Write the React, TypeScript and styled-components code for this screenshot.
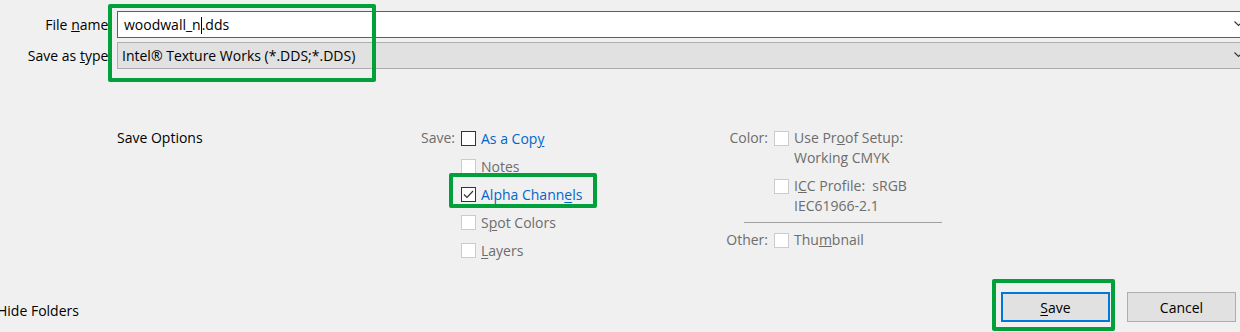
import React from "react";
import styled, { createGlobalStyle } from "styled-components";

const GlobalStyle = createGlobalStyle`
  html, body {
    margin: 0;
    padding: 0;
    background: #f0f0f0;
    overflow: hidden;
  }
  body {
    font-family: "Open Sans", "Noto Sans", sans-serif;
    font-size: 14px;
    color: #000;
  }
`;

const Dialog = styled.div`
  width: 1240px;
  height: 332px;
  display: flex;
  flex-direction: column;
  background: #f0f0f0;
  overflow: hidden;
`;

const Fields = styled.div`
  display: grid;
  grid-template-columns: 112px 1fr;
  column-gap: 5px;
  row-gap: 4px;
  padding-top: 11px;
  margin-right: -8px;
`;

const FieldLabel = styled.label`
  display: flex;
  align-items: center;
  justify-content: flex-end;
  height: 27px;
  white-space: nowrap;
`;

const FieldStack = styled.div`
  position: relative;
  grid-column: 2;
  grid-row: 1 / span 2;
  display: flex;
  flex-direction: column;
  gap: 4px;
`;

const Input = styled.div`
  position: relative;
  height: 27px;
  box-sizing: border-box;
  display: flex;
  align-items: center;
  padding-left: 6px;
  background: #fff;
  border: 1px solid #0078d7;
`;

const Caret = styled.span`
  display: inline-block;
  width: 1px;
  height: 17px;
  background: #000;
  vertical-align: middle;
`;

const Combo = styled(Input)`
  background: #e1e1e1;
  border-color: #adadad;
  padding-left: 4px;
`;

const Chevron = styled.svg`
  position: absolute;
  right: 4px;
  top: 9px;
`;

const Highlight = styled.div<{ $l: number; $t: number; $w: number; $h: number }>`
  position: absolute;
  left: ${(p) => p.$l}px;
  top: ${(p) => p.$t}px;
  width: ${(p) => p.$w}px;
  height: ${(p) => p.$h}px;
  box-sizing: border-box;
  border: 4px solid #00a13a;
  border-radius: 2px;
  pointer-events: none;
`;

const Options = styled.div`
  display: flex;
  margin-top: 59px;
`;

const SectionTitle = styled.div`
  width: 300px;
  padding-left: 117px;
  line-height: 20px;
`;

const SaveGroup = styled.div`
  position: relative;
  display: grid;
  grid-template-columns: 38px auto;
  column-gap: 6px;
  grid-auto-rows: 28px;
  margin-top: -4px;
  width: 307px;
`;

const GroupLabel = styled.div`
  color: #6d6d6d;
  text-align: right;
  line-height: 28px;
  white-space: nowrap;
`;

const CheckRow = styled.div`
  grid-column: 2;
  display: flex;
  align-items: center;
  gap: 5px;
  height: 28px;
`;

const Box = styled.span<{ $disabled?: boolean }>`
  width: 15px;
  height: 15px;
  box-sizing: border-box;
  flex: none;
  background: #fff;
  border: 1px solid ${(p) => (p.$disabled ? "#cccccc" : "#333333")};
  display: flex;
  align-items: center;
  justify-content: center;
`;

const OptText = styled.span<{ $tone: "link" | "muted" }>`
  color: ${(p) => (p.$tone === "link" ? "#0066cc" : "#6d6d6d")};
  white-space: nowrap;
  u {
    text-decoration-thickness: 1px;
    text-underline-offset: 2px;
  }
`;

const ColorGroup = styled.div`
  display: grid;
  grid-template-columns: 44px auto;
  column-gap: 6px;
  align-content: start;
  color: #6d6d6d;
  line-height: 20px;
`;

const ColorLabel = styled.div`
  grid-column: 1;
  text-align: right;
  white-space: nowrap;
`;

const ColorItem = styled.div<{ $gap?: number }>`
  grid-column: 2;
  display: flex;
  align-items: flex-start;
  gap: 5px;
  margin-top: ${(p) => p.$gap ?? 0}px;
  span:first-child {
    margin-top: 3px;
  }
`;

const Separator = styled.div`
  grid-column: 1 / span 2;
  margin: 6px 0 7px 20px;
  width: 198px;
  height: 1px;
  background: #a0a0a0;
`;

const Footer = styled.div`
  margin-top: auto;
  display: flex;
  align-items: center;
  justify-content: space-between;
  padding: 0 4px 10px 0;
`;

const HideFolders = styled.div`
  margin-left: -3px;
  margin-top: 8px;
  line-height: 20px;
`;

const Buttons = styled.div`
  position: relative;
  display: flex;
  gap: 17px;
`;

const Button = styled.button<{ $focused?: boolean }>`
  width: 109px;
  height: 30px;
  box-sizing: border-box;
  background: #e1e1e1;
  border: ${(p) => (p.$focused ? "2px solid #0078d7" : "1px solid #adadad")};
  font: inherit;
  color: #000;
  padding: 0;
  u {
    text-underline-offset: 2px;
  }
`;

const ChevronIcon = () => (
  <Chevron width="9" height="6" viewBox="0 0 9 6">
    <path d="M0.5 0.5 L4.5 4.5 L8.5 0.5" fill="none" stroke="#333" strokeWidth="1.1" />
  </Chevron>
);

const Check = () => (
  <svg width="11" height="9" viewBox="0 0 11 9">
    <path d="M1 4.5 L4 7.5 L10 1" fill="none" stroke="#333" strokeWidth="1.2" />
  </svg>
);

export default function App() {
  return (
    <Dialog>
      <GlobalStyle />
      <Fields>
        <FieldLabel style={{ gridRow: 1 }}>
          File&nbsp;<u>n</u>ame:
        </FieldLabel>
        <FieldLabel style={{ gridRow: 2 }}>
          Save as&nbsp;<u>t</u>ype:
        </FieldLabel>
        <FieldStack>
          <Input>
            <span>
              woodwall_n
              <Caret />
              .dds
            </span>
            <ChevronIcon />
          </Input>
          <Combo>
            <span>Intel® Texture Works (*.DDS;*.DDS)</span>
            <ChevronIcon />
          </Combo>
          <Highlight $l={-9} $t={-7} $w={268} $h={78} />
        </FieldStack>
      </Fields>

      <Options>
        <SectionTitle>Save Options</SectionTitle>
        <SaveGroup>
          <GroupLabel>Save:</GroupLabel>
          <CheckRow style={{ gridRow: 1 }}>
            <Box />
            <OptText $tone="link">
              As a Cop<u>y</u>
            </OptText>
          </CheckRow>
          <CheckRow>
            <Box $disabled />
            <OptText $tone="muted">
              N<u>o</u>tes
            </OptText>
          </CheckRow>
          <CheckRow>
            <Box>
              <Check />
            </Box>
            <OptText $tone="link">
              Alpha Chann<u>e</u>ls
            </OptText>
          </CheckRow>
          <CheckRow>
            <Box $disabled />
            <OptText $tone="muted">
              S<u>p</u>ot Colors
            </OptText>
          </CheckRow>
          <CheckRow>
            <Box $disabled />
            <OptText $tone="muted">
              <u>L</u>ayers
            </OptText>
          </CheckRow>
          <Highlight $l={32} $t={49} $w={148} $h={35} />
        </SaveGroup>
        <ColorGroup>
          <ColorLabel>Color:</ColorLabel>
          <ColorItem>
            <Box $disabled />
            <span>
              Use Pr<u>o</u>of Setup:
              <br />
              Working CMYK
            </span>
          </ColorItem>
          <ColorItem $gap={8}>
            <Box $disabled />
            <span>
              I<u>C</u>C Profile:&nbsp; sRGB
              <br />
              IEC61966-2.1
            </span>
          </ColorItem>
          <Separator />
          <ColorLabel>Other:</ColorLabel>
          <ColorItem>
            <Box $disabled />
            <span>
              Thu<u>m</u>bnail
            </span>
          </ColorItem>
        </ColorGroup>
      </Options>

      <Footer>
        <HideFolders>Hide Folders</HideFolders>
        <Buttons>
          <Button $focused>
            <u>S</u>ave
          </Button>
          <Button>Cancel</Button>
          <Highlight $l={-9} $t={-13} $w={123} $h={52} />
        </Buttons>
      </Footer>
    </Dialog>
  );
}
